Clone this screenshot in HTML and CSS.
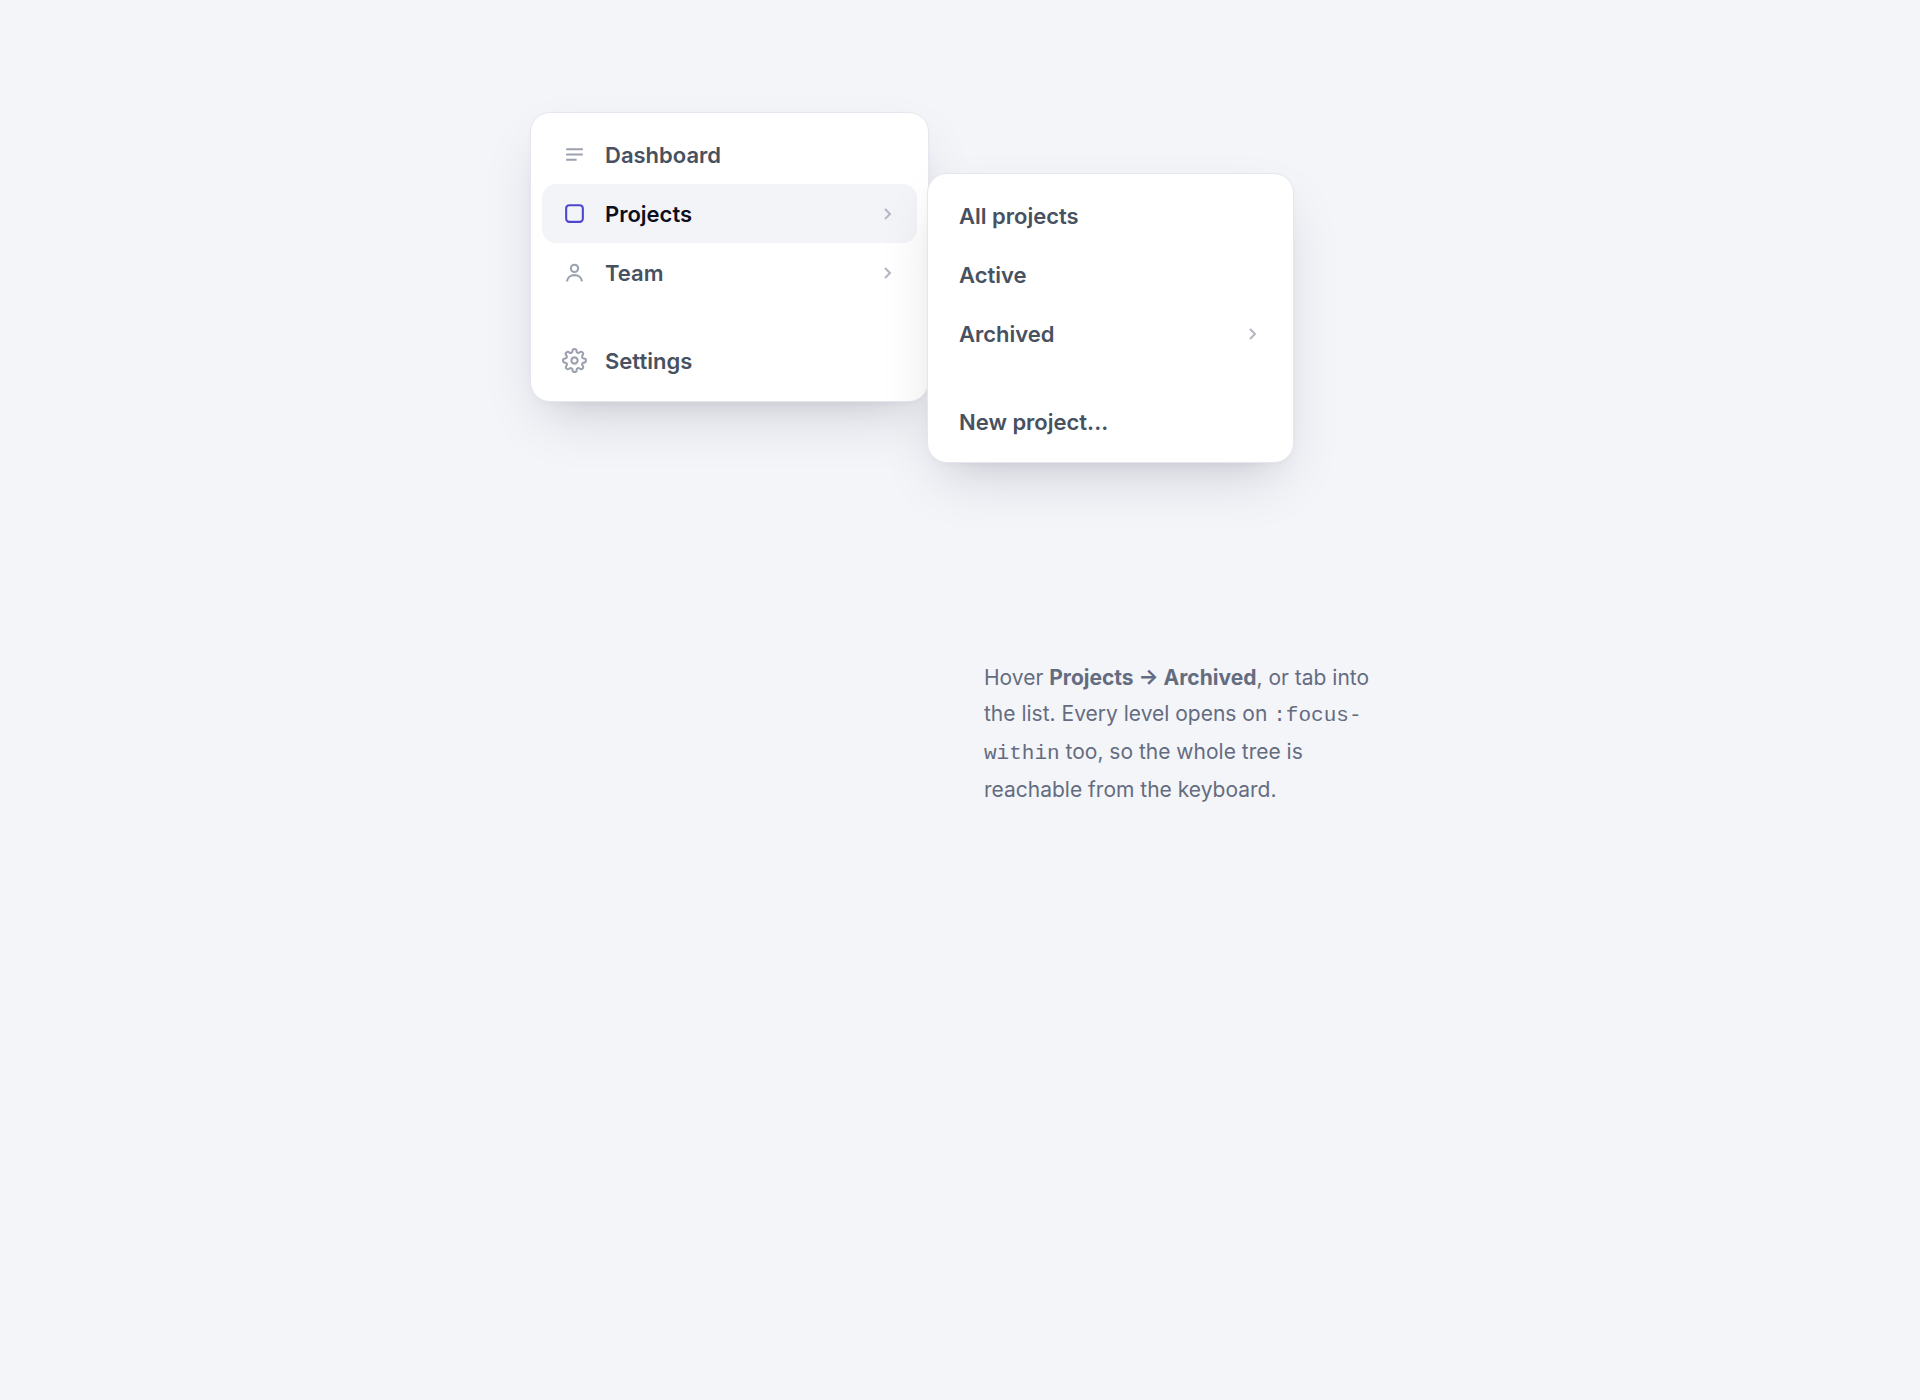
FILE: index.html
```html
<!DOCTYPE html>
<html lang="en">
<head>
  <meta charset="UTF-8">
  <meta name="viewport" content="width=device-width, initial-scale=1.0">
  <title>Nested menu</title>
  <link rel="stylesheet" href="styles.css">
</head>
<body>
  <main class="stage">
    <nav class="nav" aria-label="Main">
      <ul class="menu">
        <li class="item">
          <a href="#" class="link">
            <svg class="icon" viewBox="0 0 24 24" aria-hidden="true"><path class="butt" d="M4 7h16M4 12h16M4 17h10"/></svg>
            <span class="label">Dashboard</span>
          </a>
        </li>
        <li class="item open">
          <a href="#" class="link" aria-haspopup="true" aria-expanded="true">
            <svg class="icon" viewBox="0 0 24 24" aria-hidden="true"><rect x="4" y="4" width="16" height="16" rx="3"/></svg>
            <span class="label">Projects</span>
            <svg class="chevron" viewBox="0 0 20 20" aria-hidden="true"><path d="M8 5l5 5-5 5"/></svg>
          </a>
          <ul class="menu submenu">
            <li class="item"><a href="#" class="link"><span class="label">All projects</span></a></li>
            <li class="item"><a href="#" class="link"><span class="label">Active</span></a></li>
            <li class="item">
              <a href="#" class="link">
                <span class="label">Archived</span>
                <svg class="chevron" viewBox="0 0 20 20" aria-hidden="true"><path d="M8 5l5 5-5 5"/></svg>
              </a>
            </li>
            <li class="item separated"><a href="#" class="link"><span class="label">New project...</span></a></li>
          </ul>
        </li>
        <li class="item">
          <a href="#" class="link">
            <svg class="icon" viewBox="0 0 24 24" aria-hidden="true"><circle cx="12" cy="8" r="3.500"/><path class="butt" d="M4.800 20.500c.4-3.800 3.400-6 7.200-6s6.800 2.200 7.200 6"/></svg>
            <span class="label">Team</span>
            <svg class="chevron" viewBox="0 0 20 20" aria-hidden="true"><path d="M8 5l5 5-5 5"/></svg>
          </a>
        </li>
        <li class="item separated">
          <a href="#" class="link">
            <svg class="icon" viewBox="0 0 24 24" aria-hidden="true"><circle cx="12" cy="12" r="3"/><path d="M19.400 15a1.650 1.650 0 0 0 .33 1.820l.06.06a2 2 0 1 1-2.830 2.830l-.06-.06a1.650 1.650 0 0 0-1.820-.33 1.650 1.650 0 0 0-1 1.510V21a2 2 0 0 1-4 0v-.09A1.650 1.650 0 0 0 9 19.400a1.650 1.650 0 0 0-1.820.33l-.06.06a2 2 0 1 1-2.830-2.830l.06-.06a1.650 1.650 0 0 0 .33-1.820 1.650 1.650 0 0 0-1.510-1H3a2 2 0 0 1 0-4h.09A1.650 1.650 0 0 0 4.600 9a1.650 1.650 0 0 0-.33-1.820l-.06-.06a2 2 0 1 1 2.830-2.830l.06.06a1.650 1.650 0 0 0 1.820.33H9a1.650 1.650 0 0 0 1-1.510V3a2 2 0 0 1 4 0v.09a1.650 1.650 0 0 0 1 1.510 1.650 1.650 0 0 0 1.820-.33l.06-.06a2 2 0 1 1 2.830 2.830l-.06.06a1.650 1.650 0 0 0-.33 1.820V9a1.650 1.650 0 0 0 1.510 1H21a2 2 0 0 1 0 4h-.09a1.650 1.650 0 0 0-1.510 1z"/></svg>
            <span class="label">Settings</span>
          </a>
        </li>
      </ul>
    </nav>

    <p class="hint">Hover <strong>Projects → Archived</strong>, or tab into the list. Every level opens on <code>:focus-within</code> too, so the whole tree is reachable from the keyboard.</p>
  </main>
</body>
</html>
```

FILE: styles.css
```css
* {
  box-sizing: border-box;
}
body {
  margin: 0;
  padding: 112px 24px;
  background: #f4f5f9;
  color: #475160;
  font-family: Inter, "Liberation Sans", sans-serif;
}
.stage {
  display: flex;
  justify-content: space-between;
  max-width: 860px;
  min-height: 696px;
  margin: 0 auto;
}
.nav {
  width: 399px;
}
.menu {
  margin: 0;
  padding: 12px 11px 11px;
  list-style: none;
  background: #fff;
  border: 1px solid #e6e7ee;
  border-radius: 20px;
  box-shadow: 0 2px 4px rgba(17, 20, 45, 0.02), 0 24px 60px -12px rgba(17, 20, 45, 0.14), 0 20px 32px -24px rgba(17, 20, 45, 0.12);
}
.item {
  position: relative;
}
.separated {
  margin-top: 29px;
}
.link {
  display: flex;
  align-items: center;
  gap: 18px;
  height: 59px;
  padding: 0 20px;
  border-radius: 14px;
  color: #475160;
  font-size: 22px;
  font-weight: 600;
  text-decoration: none;
}
.label {
  flex: 1;
}
.icon {
  width: 25px;
  height: 25px;
  fill: none;
  stroke: #9ca1b0;
  stroke-width: 2;
  stroke-linecap: round;
  stroke-linejoin: round;
}
.butt {
  stroke-linecap: butt;
}
.chevron {
  width: 20px;
  height: 20px;
  fill: none;
  stroke: #b3b5c1;
  stroke-width: 2;
}
.item:hover > .link,
.open > .link {
  background: #f3f4f8;
  color: #0d0f1c;
}
.item:hover > .link .icon,
.open > .link .icon {
  stroke: #4f46d0;
}

/* flyout */
.submenu {
  position: absolute;
  top: -11px;
  left: calc(100% + 10px);
  z-index: 1;
  width: 367px;
}

.hint {
  align-self: flex-end;
  width: 406px;
  margin: 0;
  color: #646c80;
  font-size: 21px;
  line-height: 36px;
}
.hint code {
  font-family: "Liberation Mono", monospace;
  font-size: 21px;
}
```
